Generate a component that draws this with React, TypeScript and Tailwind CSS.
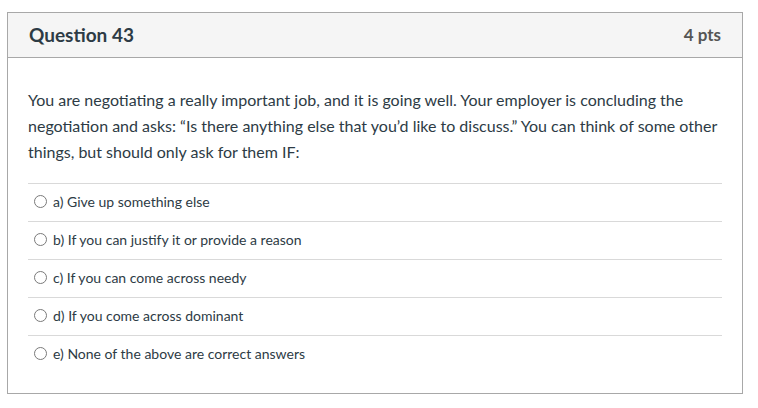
import React from 'react';

const answers = [
  'a) Give up something else',
  'b) If you can justify it or provide a reason',
  'c) If you can come across needy',
  'd) If you come across dominant',
  'e) None of the above are correct answers',
];

const App: React.FC = () => {
  return (
    <div className="w-[758px] h-[408px] bg-white pt-[12px] pl-[7px] font-['Lato',sans-serif] text-[#2d3b45]">
      <div className="w-[736px] h-[382px] border border-[#a8a8a8]">
        {/* Header */}
        <div className="h-[45px] bg-[#f5f5f5] border-b border-[#a8a8a8] flex items-center justify-between pl-[21px] pr-[21px]">
          <h2 className="text-[19px] font-bold">Question 43</h2>
          <span className="text-[17px] font-bold text-[#555555]">4 pts</span>
        </div>

        {/* Body */}
        <div className="px-5 pt-[29px]">
          <p className="text-[16px] leading-[26px]">
            You are negotiating a really important job, and it is going well. Your employer is concluding the
            negotiation and asks: “Is there anything else that you’d like to discuss.” You can think of some other
            things, but should only ask for them IF:
          </p>

          <div className="mt-[18px]">
            {answers.map((a) => (
              <div key={a} className="h-[38px] flex items-center pb-[2px] border-t border-[#d9d9d9]">
                <span className="ml-[6px] w-[13px] h-[13px] rounded-full border border-[#7a7a7a] bg-white shrink-0" />
                <span className="ml-[6px] text-[14px] leading-[18px]">{a}</span>
              </div>
            ))}
          </div>
        </div>
      </div>
    </div>
  );
};

export default App;
